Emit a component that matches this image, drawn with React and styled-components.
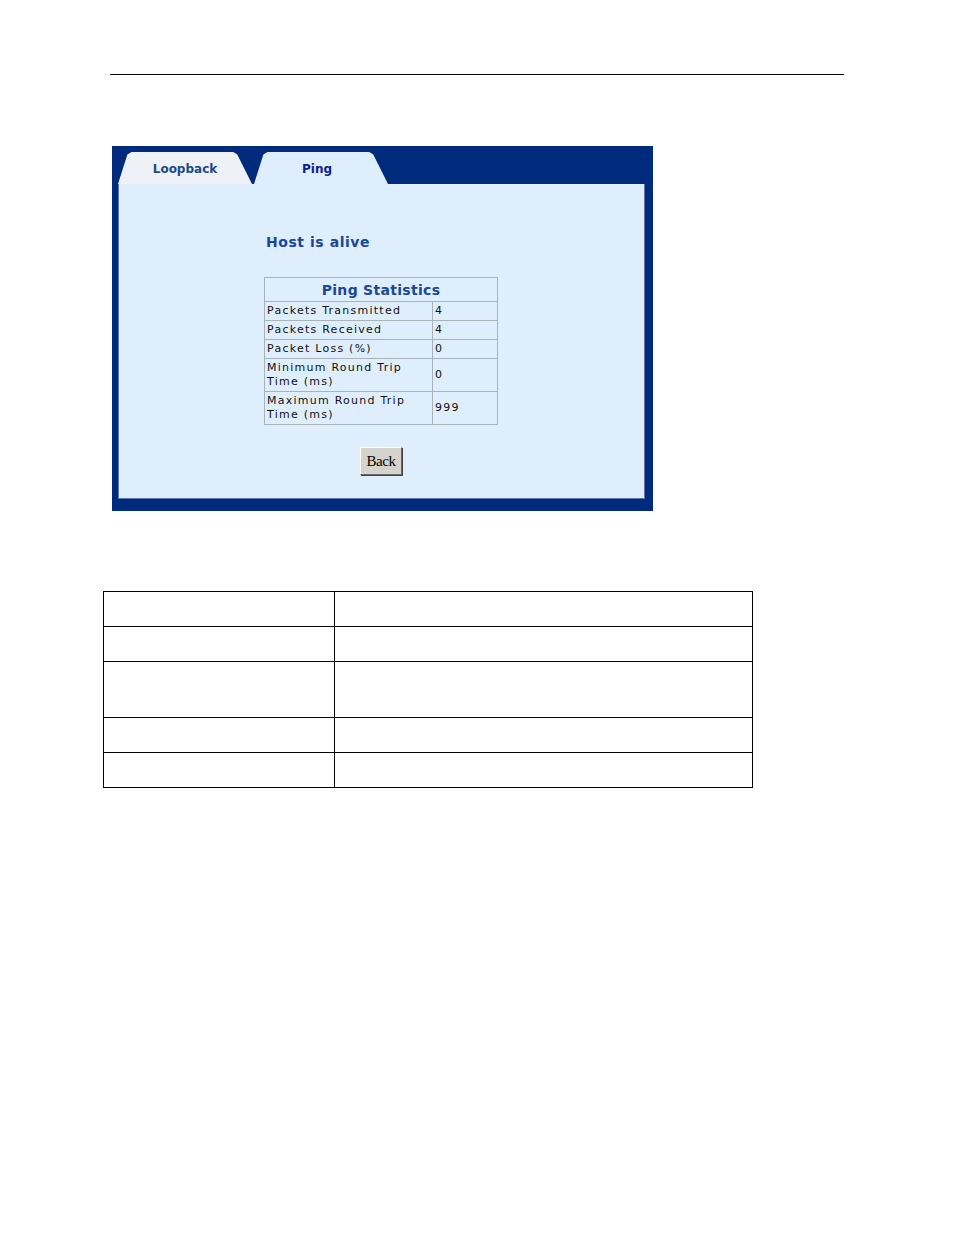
import React from 'react';
import styled, { createGlobalStyle } from 'styled-components';

const GlobalStyle = createGlobalStyle`
  body {
    margin: 0;
    background: #ffffff;
    font-family: "Liberation Serif", serif;
  }
`;

const Page = styled.div`
  width: 954px;
  min-height: 1235px;
  padding-top: 74px;
  box-sizing: border-box;
`;

const Rule = styled.hr`
  margin: 0 0 0 110px;
  width: 734px;
  border: none;
  border-top: 1px solid #000;
`;

const Frame = styled.div`
  margin: 71px 0 0 112px;
  width: 541px;
  height: 365px;
  background: #002a7c;
  padding: 6px 8px 12px 6px;
  box-sizing: border-box;
  display: flex;
  flex-direction: column;
`;

const TabRow = styled.div`
  display: flex;
  height: 32px;
  gap: 2px;
`;

const Tab = styled.div`
  width: 134px;
  height: 32px;
  display: flex;
  align-items: center;
  justify-content: center;
  padding: ${p => (p.active ? '1px 8px 0 0' : '1px 0 0 0')};
  box-sizing: border-box;
  background: ${p => (p.active ? '#dfeefd' : '#eef2f8')};
  color: ${p => (p.active ? '#0c2190' : '#1a4a8a')};
  clip-path: polygon(0 100%, 7% 8%, 10% 0, 86% 0, 89% 8%, 100% 100%);
  font-family: "DejaVu Sans", Verdana, sans-serif;
  font-weight: bold;
  font-size: 12px;
  letter-spacing: 0;
`;

const Panel = styled.div`
  flex: 1;
  background: #dfeefd;
  border: 1px solid #5a78b0;
  border-top: none;
  padding: 49px 0 0 145px;
  box-sizing: border-box;
`;

const Content = styled.div`
  width: 234px;
  display: flex;
  flex-direction: column;
`;

const Status = styled.div`
  font-family: "DejaVu Sans", Verdana, sans-serif;
  font-weight: bold;
  font-size: 14px;
  color: #1a4796;
  padding-left: 2px;
  letter-spacing: 0.55px;
  height: 18px;
  line-height: 18px;
`;

const Stats = styled.table`
  margin-top: 26px;
  width: 234px;
  border-collapse: collapse;
  border: 1px solid #8f99a3;
  font-family: "DejaVu Sans", Verdana, sans-serif;
`;

const Title = styled.th`
  height: 23px;
  padding: 0;
  font-size: 14px;
  font-weight: bold;
  color: #1a4796;
  border: 1px solid #aab2ba;
  letter-spacing: 0.3px;
`;

const Cell = styled.td`
  border: 1px solid #aab2ba;
  padding: 0 2px;
  font-size: 11px;
  line-height: 14px;
  color: #111;
  letter-spacing: 1.25px;
  height: ${p => (p.tall ? '32px' : '18px')};
  width: ${p => (p.value ? '60px' : 'auto')};
  vertical-align: middle;
`;

const ButtonRow = styled.div`
  display: flex;
  justify-content: center;
  margin-top: 22px;
`;

const BackButton = styled.button`
  width: 42px;
  height: 28px;
  padding: 0;
  background: #d6d3cc;
  border: 1px solid;
  border-color: #ffffff #6b6b6b #6b6b6b #ffffff;
  box-shadow: 1px 1px 0 #404040;
  font-family: "Liberation Serif", "Times New Roman", serif;
  font-size: 15px;
  letter-spacing: -0.5px;
  color: #000;
`;

const Grid = styled.table`
  margin: 80px 0 0 103px;
  width: 650px;
  border-collapse: collapse;
`;

const GridCell = styled.td`
  border: 1.5px solid #000;
  height: ${p => (p.tall ? '55px' : '34px')};
  width: ${p => (p.first ? '230px' : 'auto')};
  padding: 0;
`;

const stats = [
  ['Packets Transmitted', '4'],
  ['Packets Received', '4'],
  ['Packet Loss (%)', '0'],
  ['Minimum Round Trip Time (ms)', '0', true],
  ['Maximum Round Trip Time (ms)', '999', true],
];

const gridRows = [false, false, true, false, false];

const App = () => (
  <Page>
    <GlobalStyle />
    <Rule />
    <Frame>
      <TabRow>
        <Tab>Loopback</Tab>
        <Tab active>Ping</Tab>
      </TabRow>
      <Panel>
        <Content>
          <Status>Host is alive</Status>
          <Stats>
            <thead>
              <tr>
                <Title colSpan={2}>Ping Statistics</Title>
              </tr>
            </thead>
            <tbody>
              {stats.map(([label, value, tall]) => (
                <tr key={label}>
                  <Cell tall={tall}>{label}</Cell>
                  <Cell value tall={tall}>{value}</Cell>
                </tr>
              ))}
            </tbody>
          </Stats>
          <ButtonRow>
            <BackButton>Back</BackButton>
          </ButtonRow>
        </Content>
      </Panel>
    </Frame>
    <Grid>
      <tbody>
        {gridRows.map((tall, i) => (
          <tr key={i}>
            <GridCell first tall={tall} />
            <GridCell tall={tall} />
          </tr>
        ))}
      </tbody>
    </Grid>
  </Page>
);

export default App;
